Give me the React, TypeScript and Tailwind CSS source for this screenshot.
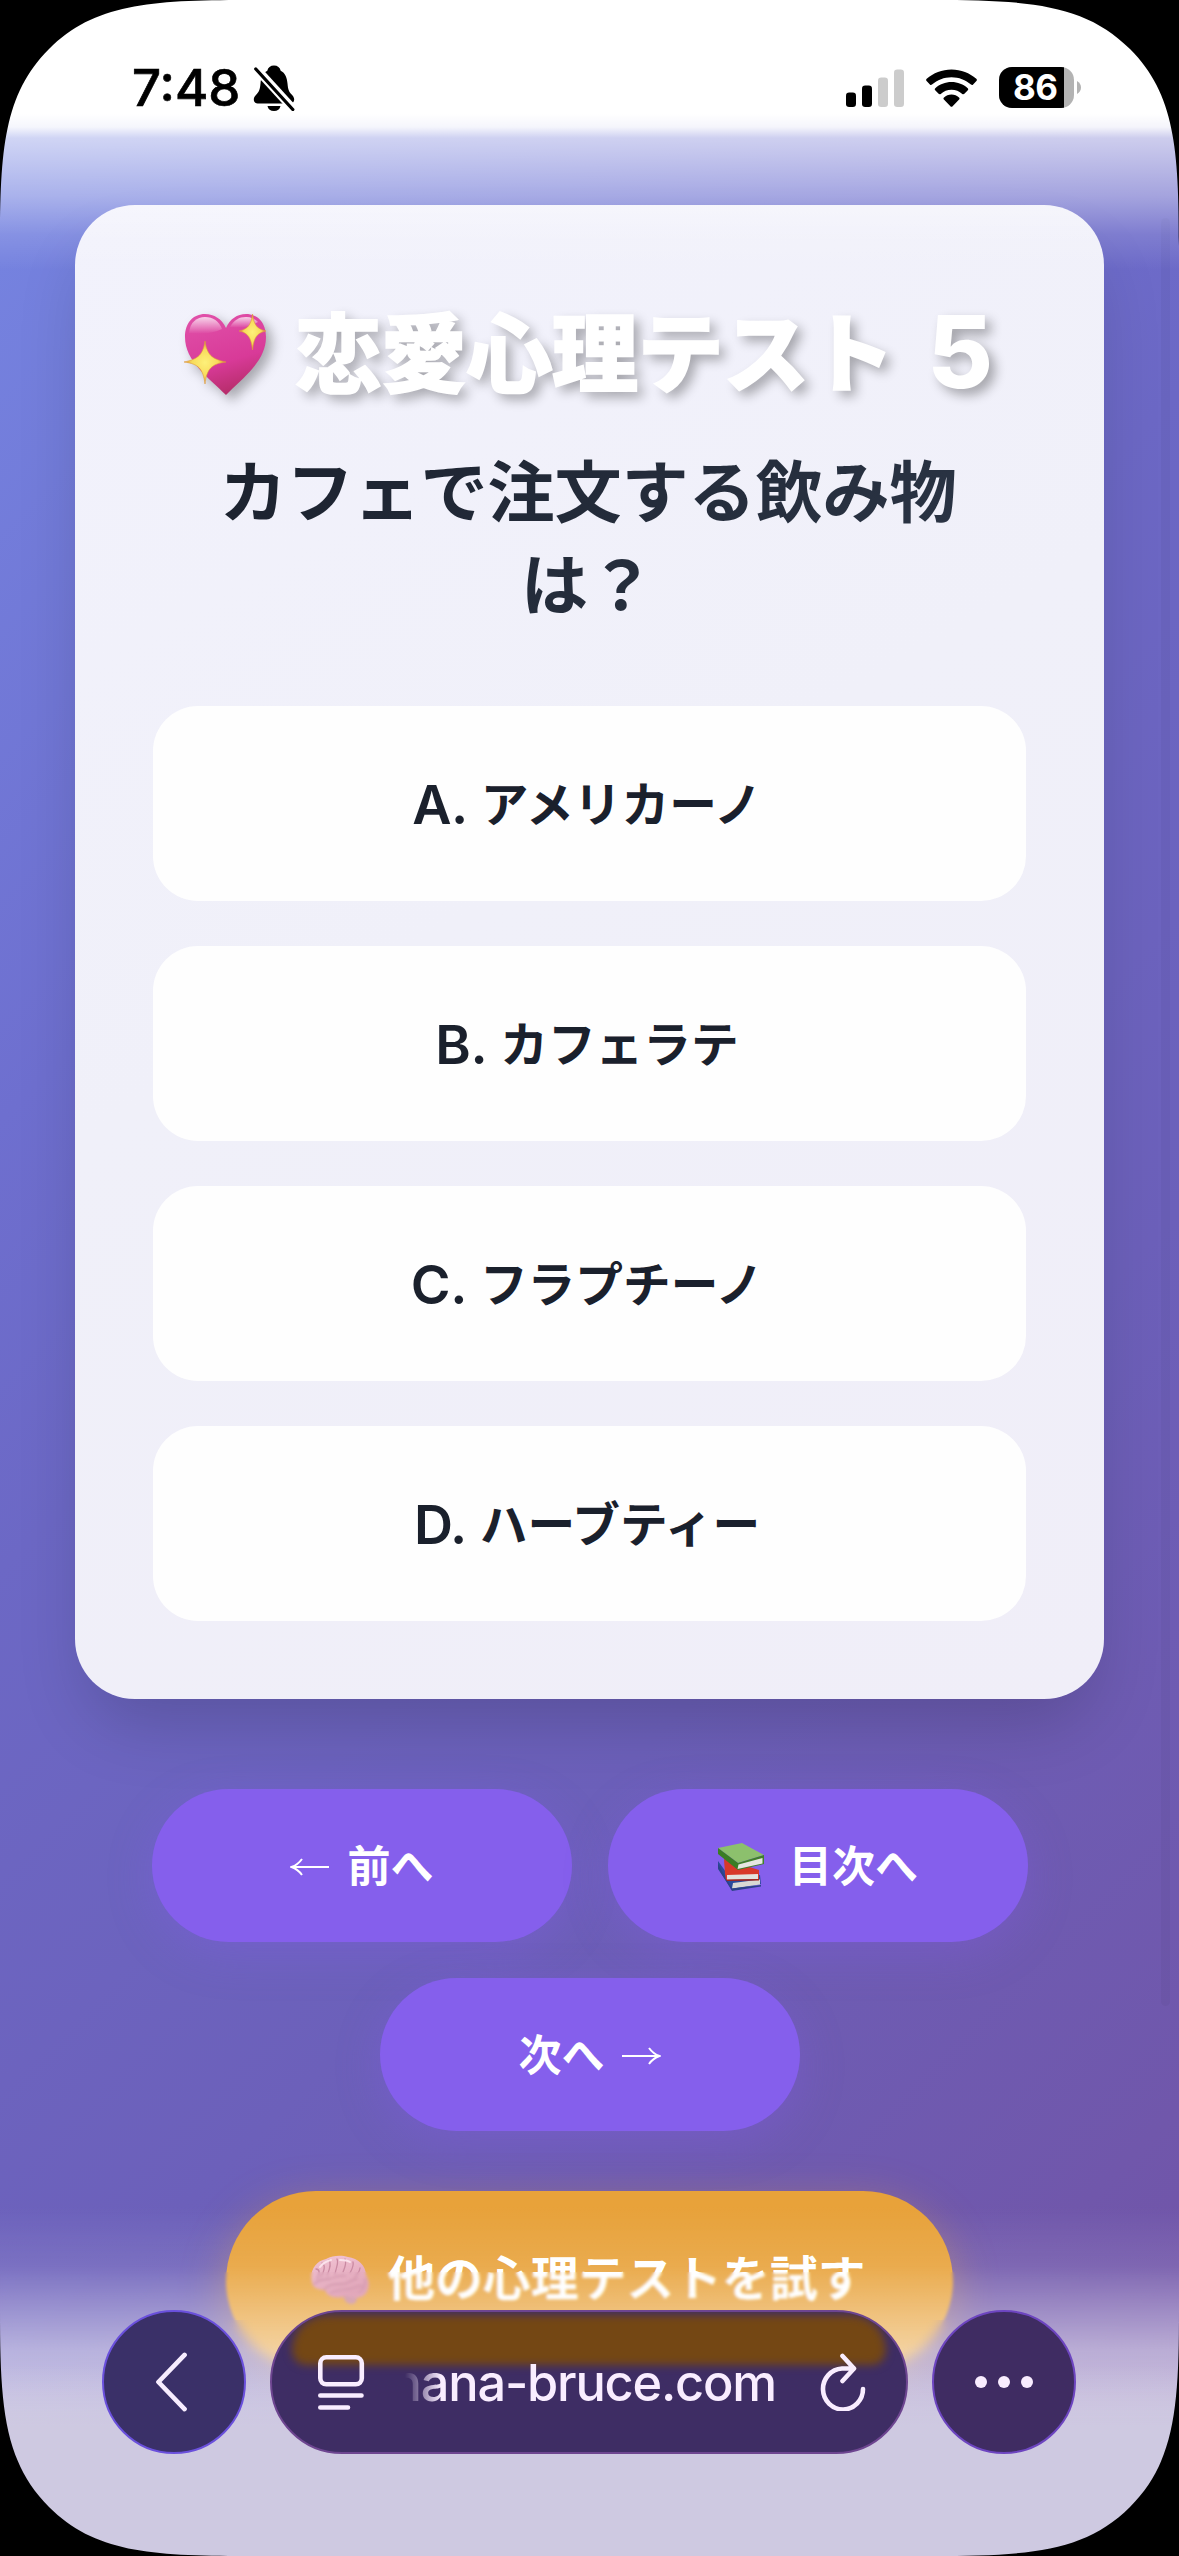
import type { ReactNode } from "react";

const FONT = "font-['Inter','Noto_Sans_CJK_JP',sans-serif]";

function BellOff() {
  return (
    <svg className="ml-[13px] h-[46px] w-[42px]" viewBox="0 0 42 46" fill="none">
      <path d="M21 0.500c-3.600 0-6 2-6.700 5.200C9.800 8 8 12.400 7.500 18.500c-.5 5.800-1.300 8.200-3.900 10.700C1.900 30.900.8 32.600.8 34.600c0 2.300 1.400 3.900 3.900 3.900h32.600c2.500 0 3.900-1.600 3.900-3.900 0-2-1.100-3.700-2.800-5.400-2.600-2.500-3.400-4.900-3.900-10.700C34 12.400 32.200 8 27.700 5.700 27 2.500 24.600.5 21 .5Z" fill="#000" />
      <path d="M14.500 41h13c-.7 3.200-3 5-6.500 5s-5.900-1.800-6.500-5Z" fill="#000" />
      <path d="M0 0 42 46" stroke="#fff" strokeWidth="8.500" />
      <path d="M2.800 4 39.800 44.500" stroke="#000" strokeWidth="3.300" strokeLinecap="round" />
    </svg>
  );
}

function Signal() {
  return (
    <svg className="h-[38px] w-[58px]" viewBox="0 0 58 38">
      <rect x="0" y="23.500" width="10" height="14.500" rx="3.200" fill="#000" />
      <rect x="16" y="16.500" width="10" height="21.500" rx="3.200" fill="#000" />
      <rect x="32" y="8.500" width="10" height="29.500" rx="3.200" fill="#ccc" />
      <rect x="48" y="0.500" width="10" height="37.500" rx="3.200" fill="#ccc" />
    </svg>
  );
}

function Wifi() {
  return (
    <svg className="ml-[22px] h-[38px] w-[51px]" viewBox="0 0 51 38" fill="#000">
      <path d="M25.500 0.500C35 .5 43.700 4 50.300 9.800c.7.600.8 1.500.1 2.200l-3.300 3.500c-.6.700-1.400.6-2.100.1-5.300-4.700-12.100-7.400-19.500-7.400S11.300 10.900 6 15.600c-.7.500-1.500.6-2.100-.1L.6 12c-.7-.7-.6-1.600.1-2.200C7.300 4 16 .5 25.500.5Z" />
      <path d="M25.500 13c6.200 0 11.900 2.300 16.200 6.200.7.600.7 1.500.1 2.100l-3.400 3.500c-.6.600-1.400.6-2.100.1-2.900-2.600-6.700-4.200-10.800-4.200s-7.900 1.600-10.800 4.200c-.7.500-1.500.5-2.100-.1l-3.400-3.500c-.6-.600-.6-1.500.1-2.100C13.600 15.300 19.300 13 25.500 13Z" />
      <path d="M25.500 25.500c2.900 0 5.500 1.100 7.500 2.900.7.600.7 1.400.1 2l-6.500 6.900c-.6.700-1.600.7-2.200 0l-6.500-6.900c-.6-.6-.6-1.400.1-2 2-1.800 4.600-2.900 7.500-2.900Z" />
    </svg>
  );
}

function Battery() {
  return (
    <div className="ml-[22px] flex items-center">
      <div className="h-[41px] w-[75px] overflow-hidden rounded-[13px] bg-[#b3b3b3]">
        <div className="flex h-full w-[65px] items-center bg-black pl-[14px] text-[35px] font-bold leading-none tracking-[-0.5px] text-white">86</div>
      </div>
      <svg className="ml-[3px] h-[13px] w-[4px]" viewBox="0 0 4 13"><path d="M0 0C2.500 1.500 4 3.500 4 6.500S2.500 11.500 0 13Z" fill="#b3b3b3" /></svg>
    </div>
  );
}

function HeartEmoji() {
  return (
    <svg className="mt-[7px] h-[84px] w-[84px] drop-shadow-[6px_6px_6px_rgba(0,0,0,0.3)]" viewBox="0 0 84 84">
      <defs>
        <linearGradient id="heart" x1="0.3" y1="0" x2="0.6" y2="1">
          <stop offset="0" stopColor="#e04fa8" /><stop offset=".6" stopColor="#d83a98" /><stop offset="1" stopColor="#b32c66" />
        </linearGradient>
        <linearGradient id="shine" x1="0" y1="0" x2="0" y2="1">
          <stop offset="0" stopColor="#fff" stopOpacity=".75" /><stop offset="1" stopColor="#fff" stopOpacity="0" />
        </linearGradient>
        <radialGradient id="star"><stop offset="0" stopColor="#fdf07a" /><stop offset=".6" stopColor="#f8dc5c" /><stop offset="1" stopColor="#e09a38" /></radialGradient>
      </defs>
      <path d="M43 82C25 64 2 48 2 24 2 10 10 1 22 1c9 0 17 5 21 14C47 6 54 1 63 1c12 0 20 9 20 23 0 24-22 40-40 58Z" fill="url(#heart)" />
      <path d="M6 20C7 9 14 4 22 4c8 0 14 4 17 12-8 4-22 6-33 4Z" fill="url(#shine)" />
      <path d="M47 14C51 7 56 4 63 4c5 0 9 2 12 5-8 5-18 7-28 5Z" fill="url(#shine)" />
      <path d="M22 28c2 13 6 18 21 21-15 2-19 7-21 22-2-15-6-20-21-22 15-3 19-8 21-21Z" fill="url(#star)" stroke="#dd9a3b" strokeWidth=".6" />
      <path d="M69.500 1c1.500 11 4.500 15 13.500 17-9 2-12 6-13.500 19C68 24 65 20 56 18c9-2 12-6 13.500-17Z" fill="url(#star)" stroke="#dd9a3b" strokeWidth=".6" />
    </svg>
  );
}

function BooksEmoji() {
  return (
    <svg className="mr-[23px] h-[50px] w-[49px]" viewBox="0 0 49 50">
      <path d="M1 19 14 37l29-4 1 9-29 6L1 27Z" fill="#2b4a9b" />
      <path d="m16 41 27-3.500v5L15 46.500Z" fill="#d9d9d4" />
      <path d="M15 46.500 44 43v1.500L15 49 1 26v-4Z" fill="#2c4288" />
      <path d="M7 17 42 28v9L9 38 8 32Z" fill="#d8382a" />
      <path d="m10 33 31-1v5l-31 1Z" fill="#e2e2de" />
      <path d="M9 37.500 42 37v1.500L10 39Z" fill="#a5241b" />
      <path d="M1 6 25 1l22 12-26 8Z" fill="#8cc06d" />
      <path d="M1 6 21 21v7L1 12Z" fill="#3a7d23" />
      <path d="m21 21 26-8v9l-26 6Z" fill="#3f7f2a" />
      <path d="m21.500 22.500 24-6.500v5.500L20.500 27Z" fill="#e6e6e2" />
    </svg>
  );
}

function BrainEmoji() {
  return (
    <svg className="mr-[18px] h-[50px] w-[60px]" viewBox="0 0 60 50" fill="none">
      <defs>
        <linearGradient id="brain" x1="0" y1="0" x2="0.3" y2="1"><stop offset="0" stopColor="#f3c3d4" /><stop offset="1" stopColor="#d98da6" /></linearGradient>
      </defs>
      <path d="M33 38c0 6 3 11 8 11 4 0 6-2 6-7Z" fill="#c98798" />
      <path d="M2 28C-1 17 5 6 16 4c7-4 16-4 22-2 10 1 18 9 18 18 5 8 3 19-5 22-5 2-11 0-15-1-8 3-19 2-21-6C8 35 3 33 2 28Z" fill="url(#brain)" />
      <g stroke="#c47d98" strokeWidth="1.300" strokeLinecap="round">
        <path d="M6 14c4 0 4 5 1 10M12 8c4 2 2 9-1 14M19 5c3 4 0 10-2 16M27 4c2 4-1 9-2 15M35 4c2 4 0 8-2 13M43 7c1 4-1 7-3 11M50 13c0 4-3 6-5 9" />
        <path d="M4 29c5-5 10-4 15-5s10-5 17-3M14 35c4-6 11-6 18-6s9-5 15-5M21 38c5-4 12-3 18-4s9-4 13-3M55 24c1 6-2 11-6 13" />
      </g>
      <path d="M10 12c3-4 7-6 11-7M30 5c4 0 7 0 10 2" stroke="#fbe0ea" strokeWidth="2" strokeLinecap="round" />
    </svg>
  );
}

function ArrowLeft() {
  return (
    <svg className="mr-[19px] h-[18px] w-[39px]" viewBox="0 0 39 18" fill="none" stroke="#fff" strokeWidth="2">
      <path d="M1.500 9H39M12 1C9.500 4.500 6 7.500 1.500 9 6 10.500 9.500 13.500 12 17" />
    </svg>
  );
}

function ArrowRight() {
  return (
    <svg className="ml-[17px] h-[18px] w-[39px]" viewBox="0 0 39 18" fill="none" stroke="#fff" strokeWidth="2">
      <path d="M0 9h37.500M27 1c2.500 3.500 6 6.500 10.500 8-4.500 1.500-8 4.500-10.500 8" />
    </svg>
  );
}

function Option({ letter, text }: { letter: string; text: string }) {
  return (
    <button className="flex h-[195px] w-full items-center justify-center rounded-[45px] bg-[#fefefe] pr-[5px] text-[47.700px] font-semibold leading-none text-[#1a202c]">
      <span className="mr-[13px] mt-[3px] text-[54px] tracking-[-0.5px]">{letter}.</span>
      <span className="mb-[4px] font-['Noto_Sans_CJK_JP'] font-semibold">{text}</span>
    </button>
  );
}

function NavButton({ children }: { children: ReactNode }) {
  return (
    <button className="flex h-[153px] w-[420px] items-center justify-center rounded-full bg-[#855fec] pt-[2px] text-[43px] font-semibold leading-none text-white shadow-[0_12px_45px_rgba(139,92,246,0.25)]">
      {children}
    </button>
  );
}

function Corner({ place }: { place: string }) {
  return (
    <svg className={`absolute z-30 h-[246px] w-[246px] ${place}`} viewBox="0 0 246 246">
      <path d="M0 0H246C150 0 94 4 49 49S0 150 0 246Z" fill="#000" />
    </svg>
  );
}

const OPTIONS = [
  ["A", "アメリカーノ"],
  ["B", "カフェラテ"],
  ["C", "フラプチーノ"],
  ["D", "ハーブティー"],
];

export default function App() {
  return (
    <div className={`relative h-[2556px] w-[1179px] overflow-hidden bg-[linear-gradient(135deg,#7686e4_0%,#7582df_7%,#6e6fcf_30%,#6c68c5_42%,#6c60ba_64%,#7057ab_88%,#7152a5_100%)] ${FONT}`}>
      {/* status bar */}
      <header className="relative z-20 flex h-[205px] items-start justify-between pl-[132px] pr-[98px] pt-[64px] text-black">
        <div className="flex h-[48px] items-center">
          <span className="mb-[2px] w-[108px] whitespace-nowrap text-[51px] font-medium leading-none tracking-[0px] [-webkit-text-stroke:0.6px_#000]">7:48</span>
          <BellOff />
        </div>
        <div className="flex h-[47px] items-center">
          <Signal />
          <Wifi />
          <Battery />
        </div>
      </header>
      <div className="absolute inset-x-0 top-0 z-10 h-[270px] bg-[linear-gradient(180deg,#fff_0px,#fff_114px,rgba(255,255,255,0.93)_127px,rgba(255,255,255,0.66)_138px,rgba(255,255,255,0.38)_196px,rgba(255,255,255,0.12)_235px,rgba(255,255,255,0)_270px)]" />

      <main className="flex flex-col items-center">
        <section className="flex h-[1494px] w-[1029px] flex-col rounded-[60px] bg-[linear-gradient(150deg,#f2f2fc,#f0f0f9_45%,#f0eef8)] px-[78px] shadow-[0_36px_70px_-14px_rgba(0,0,0,0.18)]">
          <h1 className="mt-[96px] flex h-[100px] items-center justify-center whitespace-nowrap pr-[3px] text-[86.500px] font-black leading-none text-white">
            <HeartEmoji />
            <span className="mb-[4px] ml-[28px] font-['Noto_Sans_CJK_JP'] tracking-[-0.9px] [-webkit-text-stroke:1.5px_#fff] [text-shadow:6px_6px_12px_rgba(0,0,0,0.32)]">恋愛心理テスト</span>
            <span className="ml-[33px] text-[101px] font-extrabold [text-shadow:6px_6px_12px_rgba(0,0,0,0.32)]">5</span>
          </h1>
          <h2 className="mt-[40px] bg-[linear-gradient(135deg,#1a202c,#2d3748)] bg-clip-text pr-[3px] text-center font-['Noto_Sans_CJK_JP'] text-[67.200px] font-bold leading-[93px] tracking-[-0.2px] text-transparent">
            カフェで注文する飲み物<br />は？
          </h2>
          <div className="mt-[79px] flex flex-col gap-[45px]">
            {OPTIONS.map(([l, t]) => (
              <Option key={l} letter={l} text={t} />
            ))}
          </div>
        </section>

        <nav className="mt-[90px] flex w-[876px] flex-wrap justify-center gap-[36px]">
          <NavButton><ArrowLeft />前へ</NavButton>
          <NavButton><BooksEmoji />目次へ</NavButton>
          <NavButton>次へ<ArrowRight /></NavButton>
        </nav>

        <button className="mt-[60px] flex h-[180px] w-[727px] items-center justify-center rounded-full bg-[#e8a23a] pb-[2px] pr-[4px] text-[47.800px] font-semibold leading-none text-white shadow-[0_12px_45px_rgba(232,162,58,0.4)]">
          <BrainEmoji />他の心理テストを試す
        </button>
      </main>

      {/* page scroll indicator */}
      <div className="absolute right-[9px] top-[218px] h-[1788px] w-[9px] rounded-full bg-black/[0.03]" />

      {/* frosted fade behind the browser bar */}
      <div className="absolute inset-x-0 bottom-0 h-[284px] backdrop-blur-[1.5px]" />
      <div className="absolute inset-x-0 bottom-0 h-[236px] backdrop-blur-[6px]" />
      <div className="absolute inset-x-0 bottom-0 h-[350px] bg-[linear-gradient(180deg,rgba(255,255,255,0)_0px,rgba(255,255,255,0.1)_60px,rgba(255,255,255,0.3)_100px,rgba(255,255,255,0.52)_145px,rgba(255,255,255,0.64)_205px,rgba(255,255,255,0.68)_350px)]" />
      <div className="absolute inset-x-0 bottom-0 h-[190px] bg-[linear-gradient(180deg,rgba(206,201,225,0)_0px,rgba(206,201,225,1)_60px)]" />

      {/* browser bar */}
      <footer className="absolute inset-x-0 bottom-[102px] z-20 flex h-[144px] justify-center gap-[24px] pr-[1px]">
        <button className="flex size-[144px] items-center justify-center rounded-full border-[2px] border-[#6a50dc] bg-[#3a3068]">
          <svg className="-ml-[5px] h-[60px] w-[35px]" viewBox="0 0 35 62" fill="none" stroke="#f7edff" strokeWidth="4.800" strokeLinecap="round" strokeLinejoin="round"><path d="M31 3 4 31 31 59" /></svg>
        </button>
        <div className="relative flex h-[144px] w-[638px] items-center overflow-hidden rounded-full border-[2px] border-[#6d4590] bg-[#3e2d64] text-[#f9edff]">
          <div className="absolute left-[20px] right-[20px] top-[3px] h-[50px] rounded-t-[48px] rounded-b-[20px] bg-[#744714] blur-[4px]" />
          <svg className="relative ml-[45px] h-[56px] w-[48px]" viewBox="0 0 48 56" fill="none" stroke="currentColor" strokeWidth="4.600" strokeLinecap="round">
            <rect x="3.300" y="3.300" width="41.500" height="27" rx="6" /><path d="M3.300 41.500H44.500M3.300 53.500H31" />
          </svg>
          <span className="relative ml-[8px] flex w-[403px] justify-end whitespace-nowrap pt-[2px] text-[50.500px] font-medium leading-[70px] tracking-[-1.200px] [mask-image:linear-gradient(90deg,transparent_32px,#000_68px)]">nana-bruce.com</span>
          <svg className="relative ml-[42px] h-[58px] w-[50px]" viewBox="0 0 50 58" fill="none" stroke="currentColor" strokeWidth="4.600" strokeLinecap="round" strokeLinejoin="round">
            <path d="M36 15.500H24A20 20.500 0 1 0 45 36M24.500 3 36 15.500 24.500 28" />
          </svg>
        </div>
        <button className="flex size-[144px] items-center justify-center gap-[11px] rounded-full border-[2px] border-[#6d45c0] bg-[#3f2c62]">
          <i className="size-[12px] rounded-full bg-[#f9edff]" />
          <i className="size-[12px] rounded-full bg-[#f9edff]" />
          <i className="size-[12px] rounded-full bg-[#f9edff]" />
        </button>
      </footer>

      <Corner place="left-0 top-0" />
      <Corner place="right-0 top-0 -scale-x-100" />
      <Corner place="bottom-0 left-0 -scale-y-100" />
      <Corner place="bottom-0 right-0 -scale-100" />
    </div>
  );
}
